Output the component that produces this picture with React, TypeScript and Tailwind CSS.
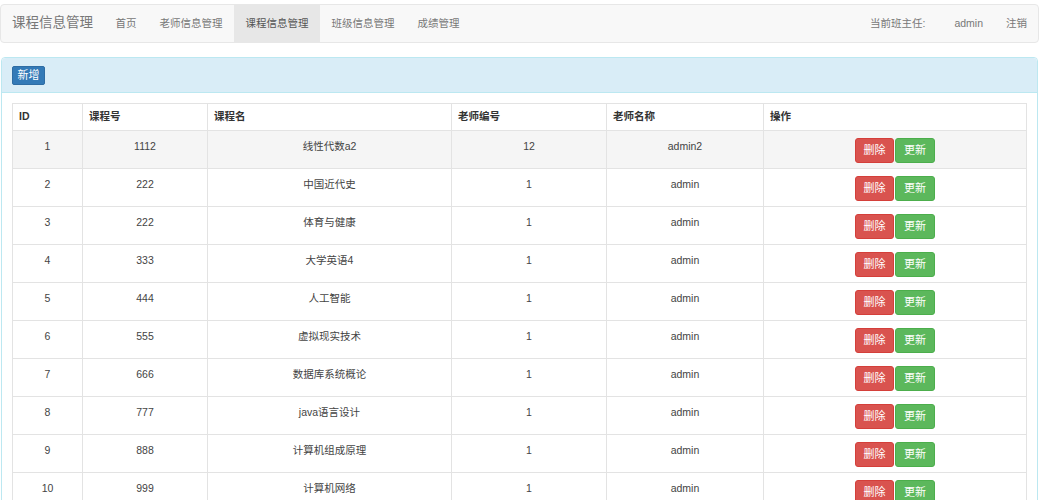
import React from 'react';

interface Course {
  id: number;
  code: string;
  name: string;
  teacherNo: string;
  teacherName: string;
}

const courses: Course[] = [
  { id: 1, code: '1112', name: '线性代数a2', teacherNo: '12', teacherName: 'admin2' },
  { id: 2, code: '222', name: '中国近代史', teacherNo: '1', teacherName: 'admin' },
  { id: 3, code: '222', name: '体育与健康', teacherNo: '1', teacherName: 'admin' },
  { id: 4, code: '333', name: '大学英语4', teacherNo: '1', teacherName: 'admin' },
  { id: 5, code: '444', name: '人工智能', teacherNo: '1', teacherName: 'admin' },
  { id: 6, code: '555', name: '虚拟现实技术', teacherNo: '1', teacherName: 'admin' },
  { id: 7, code: '666', name: '数据库系统概论', teacherNo: '1', teacherName: 'admin' },
  { id: 8, code: '777', name: 'java语言设计', teacherNo: '1', teacherName: 'admin' },
  { id: 9, code: '888', name: '计算机组成原理', teacherNo: '1', teacherName: 'admin' },
  { id: 10, code: '999', name: '计算机网络', teacherNo: '1', teacherName: 'admin' },
];

const navItems = ['首页', '老师信息管理', '课程信息管理', '班级信息管理', '成绩管理'];

const App: React.FC = () => {
  return (
    <div className="min-h-[500px] bg-white pt-[4px] font-['Liberation_Sans','Noto_Sans_CJK_SC',sans-serif]">
      {/* navbar */}
      <div className="flex h-[39px] items-stretch rounded-[4px] border border-[#e7e7e7] bg-[#f8f8f8] text-[#777]">
        <div className="flex items-center pl-[11px] pr-[11px] text-[13.5px]">课程信息管理</div>
        <ul className="flex items-stretch">
          {navItems.map((item) => (
            <li
              key={item}
              className={`flex items-center px-[11.5px] text-[10.5px] ${item === '课程信息管理' ? 'bg-[#e7e7e7] text-[#555]' : ''}`}
            >
              {item}
            </li>
          ))}
        </ul>
        <div className="ml-auto flex items-center pr-[11px] text-[10.5px]">
          <span>当前班主任:</span>
          <span className="ml-[29px]">admin</span>
          <span className="ml-[23px]">注销</span>
        </div>
      </div>

      {/* panel */}
      <div className="mt-[14px] mx-[1px] rounded-[4px] border border-[#bce8f1]">
        <div className="flex h-[35px] items-center rounded-t-[4px] border-b border-[#bce8f1] bg-[#d9edf7] px-[10px]">
          <button className="flex h-[19px] w-[33px] items-center justify-center rounded-[2px] border border-[#2e6da4] bg-[#337ab7] text-[11px] text-white">
            新增
          </button>
        </div>
        <div className="px-[10px] pt-[10px]">
          <table className="w-full table-fixed border-collapse text-[10.5px] text-[#444]">
            <colgroup>
              <col className="w-[70px]" />
              <col className="w-[125px]" />
              <col className="w-[244px]" />
              <col className="w-[155px]" />
              <col className="w-[157px]" />
              <col />
            </colgroup>
            <thead>
              <tr className="h-[27px]">
                {['ID', '课程号', '课程名', '老师编号', '老师名称', '操作'].map((h) => (
                  <th
                    key={h}
                    className="border border-[#e3e3e3] px-[6px] text-left align-middle text-[10.5px] font-bold text-[#333]"
                  >
                    {h}
                  </th>
                ))}
              </tr>
            </thead>
            <tbody>
              {courses.map((c) => (
                <tr key={c.id} className={`h-[38px] ${c.id === 1 ? 'bg-[#f5f5f5]' : 'bg-white'}`}>
                  <td className="border border-[#e3e3e3] pt-[6px] text-center align-top leading-[18px]">{c.id}</td>
                  <td className="border border-[#e3e3e3] pt-[6px] text-center align-top leading-[18px]">{c.code}</td>
                  <td className="border border-[#e3e3e3] pt-[6px] text-center align-top leading-[18px]">{c.name}</td>
                  <td className="border border-[#e3e3e3] pt-[6px] text-center align-top leading-[18px]">{c.teacherNo}</td>
                  <td className="border border-[#e3e3e3] pt-[6px] text-center align-top leading-[18px]">{c.teacherName}</td>
                  <td className="border border-[#e3e3e3] pt-[7px] pb-[5px] align-top">
                    <div className="flex justify-center gap-[1px]">
                      <button className="flex h-[25px] w-[39px] items-center justify-center rounded-[3px] border border-[#d43f3a] bg-[#d9534f] text-[11px] text-white">
                        删除
                      </button>
                      <button className="flex h-[25px] w-[40px] items-center justify-center rounded-[3px] border border-[#4cae4c] bg-[#5cb85c] text-[11px] text-white">
                        更新
                      </button>
                    </div>
                  </td>
                </tr>
              ))}
            </tbody>
          </table>
        </div>
      </div>
    </div>
  );
};

export default App;
